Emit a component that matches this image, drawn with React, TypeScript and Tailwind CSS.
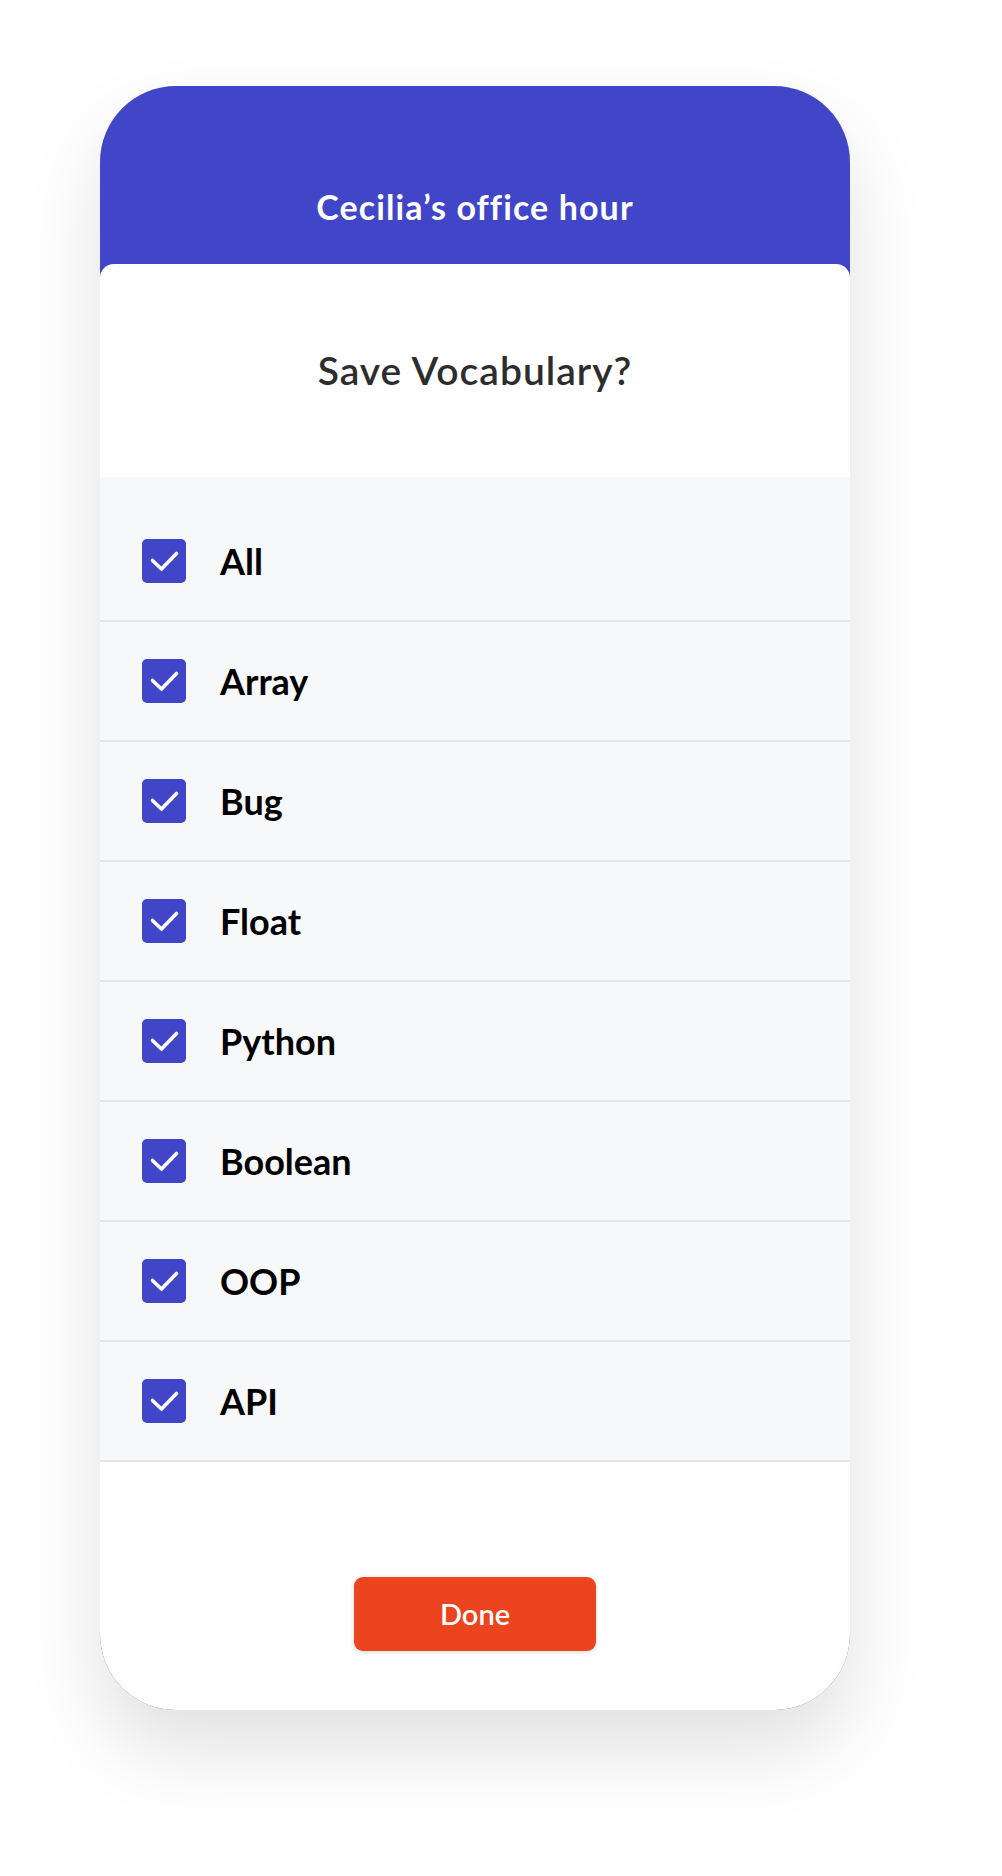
import { useState } from 'react';

const WORDS = ['All', 'Array', 'Bug', 'Float', 'Python', 'Boolean', 'OOP', 'API'];

const CheckBox = ({ checked }: { checked: boolean }) => (
  <div className="w-[44px] h-[44px] rounded-[5px] bg-[#4146c9] flex items-center justify-center shrink-0">
    {checked && (
      <svg width="44" height="44" viewBox="0 0 44 44" fill="none">
        <path d="M10.5 21.5 L19.5 30 L34.5 14.5" stroke="#fff" strokeWidth="3.6" strokeLinecap="round" strokeLinejoin="round" />
      </svg>
    )}
  </div>
);

const App = () => {
  const [checked, setChecked] = useState<Record<string, boolean>>(
    Object.fromEntries(WORDS.map((w) => [w, true]))
  );

  const toggle = (w: string) => setChecked((c) => ({ ...c, [w]: !c[w] }));

  return (
    <div className="min-h-[1876px] bg-white pl-[100px] pt-[86px] font-['Lato',sans-serif]">
      <div className="w-[750px] h-[1624px] rounded-[76px] overflow-hidden bg-[#4146c9] flex flex-col shadow-[0_40px_80px_rgba(0,0,0,0.12)]">
        <div className="h-[178px] shrink-0 pt-[101px] text-center text-white text-[34px] font-bold leading-[40px] tracking-[1.1px]">
          Cecilia’s office hour
        </div>
        <div className="flex-1 bg-white rounded-t-[14px] flex flex-col">
          <div className="h-[213px] flex items-center justify-center text-[39px] font-semibold text-[#2d2d2d] tracking-[1px]">
            Save Vocabulary?
          </div>
          <div className="bg-[#f7f8fa] pt-[25px]">
            {WORDS.map((w) => (
              <div
                key={w}
                onClick={() => toggle(w)}
                className="h-[120px] flex items-center pl-[42px] gap-[34px] border-b-2 border-[#e4e6ea] cursor-pointer"
              >
                <CheckBox checked={checked[w]} />
                <span className="text-[36px] font-bold text-black">{w}</span>
              </div>
            ))}
          </div>
          <div className="flex-1 flex justify-center pt-[115px]">
            <button className="w-[242px] h-[74px] rounded-[9px] bg-[#eb441e] text-white text-[29px] font-semibold shadow-[0_1px_4px_rgba(0,0,0,0.18)]">
              Done
            </button>
          </div>
        </div>
      </div>
    </div>
  );
};

export default App;
